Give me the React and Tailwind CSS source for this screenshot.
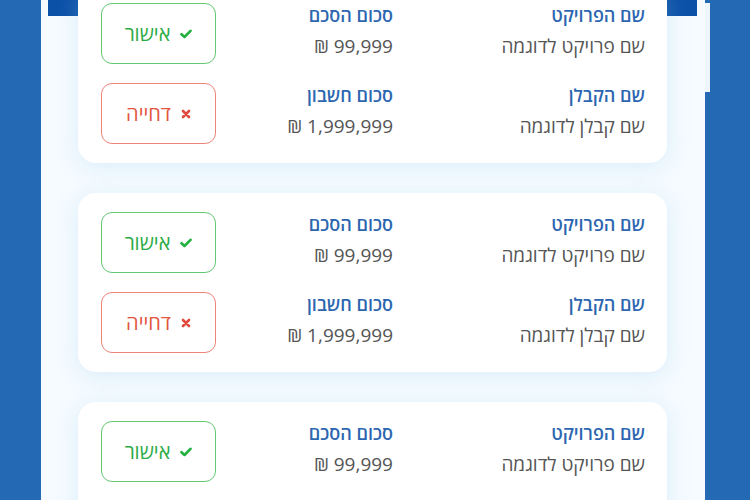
import React from "react";

const Check = () => (
  <svg width="12" height="10" viewBox="0 0 12 10" fill="none">
    <path d="M1.5 5.2 L4.5 8 L10.5 1.8" stroke="#22b13f" strokeWidth="2.6" strokeLinecap="round" strokeLinejoin="round" />
  </svg>
);

const Cross = () => (
  <svg width="10" height="10" viewBox="0 0 10 10" fill="none">
    <path d="M2 2 L8 8 M8 2 L2 8" stroke="#e2483b" strokeWidth="2.6" strokeLinecap="round" />
  </svg>
);

function Field({ label, value }) {
  return (
    <div className="flex flex-col items-start mb-[6px]">
      <div className="text-[18px] leading-[24px] font-semibold text-[#2c66b0]">{label}</div>
      <div className="text-[19px] leading-[26px] mt-[6px] text-[#555555]">{value}</div>
    </div>
  );
}

function Row({ l1, v1, l2, v2, approve }) {
  return (
    <div className="flex items-center h-[61px]">
      <div className="w-[252px]">
        <Field label={l1} value={v1} />
      </div>
      <div className="flex-1">
        <Field label={l2} value={v2} />
      </div>
      {approve ? (
        <div className="w-[115px] h-[61px] rounded-[11px] border-[1.5px] border-[#63c873] flex items-center justify-center gap-[10px]">
          <Check />
          <span className="text-[20px] text-[#2bab46]">אישור</span>
        </div>
      ) : (
        <div className="w-[115px] h-[61px] rounded-[11px] border-[1.5px] border-[#ee8378] flex items-center justify-center gap-[10px]">
          <Cross />
          <span className="text-[20px] text-[#e2553f]">דחייה</span>
        </div>
      )}
    </div>
  );
}

function Card() {
  return (
    <div className="relative z-10 bg-white rounded-[18px] h-[179px] shrink-0 pl-[23px] pr-[22px] pt-[19px] flex flex-col gap-[19px] shadow-[0_4px_22px_rgba(150,200,235,0.28)]">
      <Row l1="שם הפרויקט" v1="שם פרויקט לדוגמה" l2="סכום הסכם" v2="99,999 ₪" approve />
      <Row l1="שם הקבלן" v1="שם קבלן לדוגמה" l2="סכום חשבון" v2="1,999,999 ₪" />
    </div>
  );
}

export default function App() {
  return (
    <div
      dir="rtl"
      className="w-[750px] h-[500px] overflow-hidden flex bg-[#2469b3]"
      style={{ fontFamily: '"Open Sans", "DejaVu Sans", sans-serif' }}
    >
      <div className="w-[45px] shrink-0 pt-[3px] flex flex-col items-end">
        <div className="w-[5px] h-[89px] bg-[#eef6fc]" />
      </div>
      <div className="w-[664px] shrink-0 bg-[#f5fbff] flex flex-col">
        <div className="h-[16px] shrink-0 mr-[8px] ml-[7px] bg-[#0c51a8]" />
        <div className="mt-[-32px] mr-[38px] ml-[37px] flex flex-col gap-[30px]">
          <Card />
          <Card />
          <Card />
        </div>
      </div>
      <div className="flex-1" />
    </div>
  );
}
